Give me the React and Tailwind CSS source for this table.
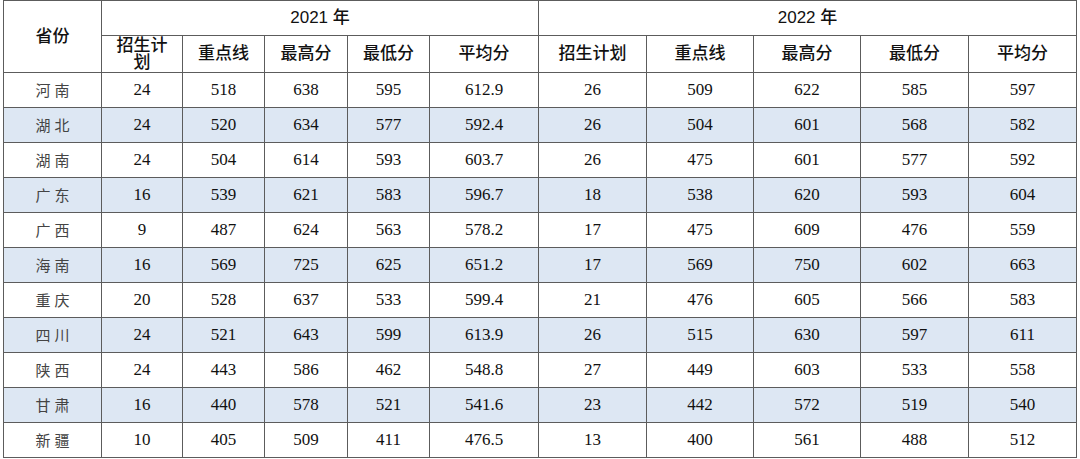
import React from "react";

const rows = [
  ["河南", "24", "518", "638", "595", "612.9", "26", "509", "622", "585", "597"],
  ["湖北", "24", "520", "634", "577", "592.4", "26", "504", "601", "568", "582"],
  ["湖南", "24", "504", "614", "593", "603.7", "26", "475", "601", "577", "592"],
  ["广东", "16", "539", "621", "583", "596.7", "18", "538", "620", "593", "604"],
  ["广西", "9", "487", "624", "563", "578.2", "17", "475", "609", "476", "559"],
  ["海南", "16", "569", "725", "625", "651.2", "17", "569", "750", "602", "663"],
  ["重庆", "20", "528", "637", "533", "599.4", "21", "476", "605", "566", "583"],
  ["四川", "24", "521", "643", "599", "613.9", "26", "515", "630", "597", "611"],
  ["陕西", "24", "443", "586", "462", "548.8", "27", "449", "603", "533", "558"],
  ["甘肃", "16", "440", "578", "521", "541.6", "23", "442", "572", "519", "540"],
  ["新疆", "10", "405", "509", "411", "476.5", "13", "400", "561", "488", "512"],
];

const head = "font-['Liberation_Sans','Noto_Sans_CJK_SC',sans-serif] text-[17px] font-medium text-[#111]";

const App = () => {
  return (
    <div className="w-[1080px] h-[459px] bg-white">
      <div className="ml-[3px] w-[1074px] grid grid-cols-[97px_80px_81px_82px_81px_108px_107px_106px_106px_107px_107px] grid-rows-[34px_36px_repeat(11,34px)] gap-px bg-[#5c5c5c] border border-[#5c5c5c]">
        <div className={`row-span-2 bg-white flex items-center justify-center ${head}`}>省份</div>
        <div className={`col-span-5 bg-white flex items-center justify-center ${head}`}>2021 年</div>
        <div className={`col-span-5 bg-white flex items-center justify-center ${head}`}>2022 年</div>

        <div className={`bg-white flex items-center justify-center text-center leading-[17px] ${head}`}>
          招生计<br />划
        </div>
        {["重点线", "最高分", "最低分", "平均分"].map((t) => (
          <div key={"a" + t} className={`bg-white flex items-center justify-center ${head}`}>{t}</div>
        ))}
        {["招生计划", "重点线", "最高分", "最低分", "平均分"].map((t) => (
          <div key={"b" + t} className={`bg-white flex items-center justify-center ${head}`}>{t}</div>
        ))}

        {rows.map((r, i) =>
          r.map((c, j) => (
            <div
              key={i + "-" + j}
              className={`flex items-center justify-center ${i % 2 === 1 ? "bg-[#dde7f3]" : "bg-white"} ${
                j === 0
                  ? "font-['Noto_Sans_CJK_SC',sans-serif] text-[15px] tracking-[4px] pl-[4px] text-[#444]"
                  : "font-['Liberation_Serif',serif] text-[17px] text-[#111]"
              }`}
            >
              {c}
            </div>
          ))
        )}
      </div>
    </div>
  );
};

export default App;
